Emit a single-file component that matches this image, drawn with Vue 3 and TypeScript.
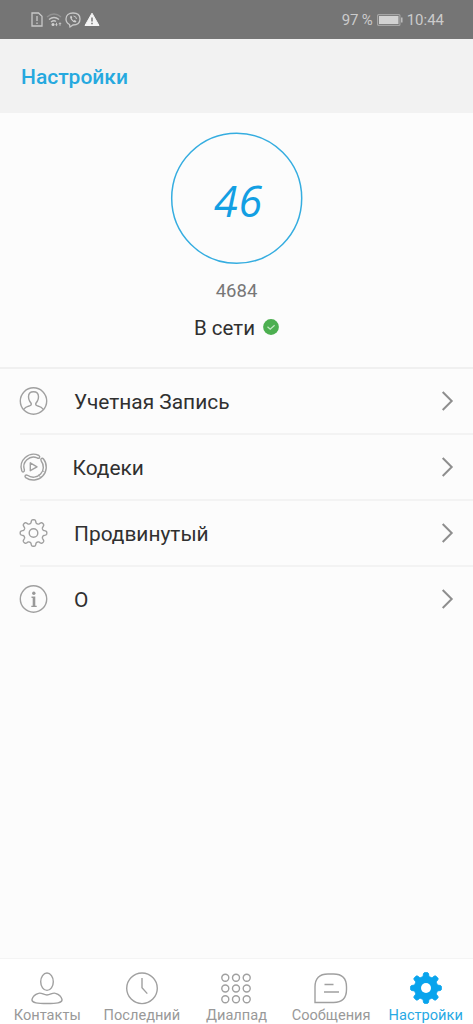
<script setup lang="ts">
interface Row { id: string; label: string }

const rows: Row[] = [
  { id: 'account', label: 'Учетная Запись' },
  { id: 'codecs', label: 'Кодеки' },
  { id: 'advanced', label: 'Продвинутый' },
  { id: 'about', label: 'О' },
]
const tabs: Row[] = [
  { id: 'contacts', label: 'Контакты' },
  { id: 'recent', label: 'Последний' },
  { id: 'dialpad', label: 'Диалпад' },
  { id: 'messages', label: 'Сообщения' },
  { id: 'settings', label: 'Настройки' },
]
const dots = [0, 1, 2, 3, 4, 5, 6, 7, 8].map((i) => ({ x: 6.3 + (i % 3) * 10.7, y: 6.8 + Math.floor(i / 3) * 10.7 }))

// Eight-toothed cog with softly rounded teeth; sharpness sets how square they are.
function cog(c: number, mid: number, depth: number, sharpness: number): string {
  const points: string[] = []
  for (let i = 0; i < 240; i++) {
    const a = (i * Math.PI) / 120
    const r = mid + (depth * Math.tanh(sharpness * Math.cos(8 * a))) / Math.tanh(sharpness)
    points.push(`${(c + r * Math.cos(a)).toFixed(2)} ${(c + r * Math.sin(a)).toFixed(2)}`)
  }
  return `M${points.join('L')}Z`
}
const outlineCog = cog(14, 11.6, 1.7, 1.8)
const solidCog = cog(17, 13.6, 1.9, 2.6)
</script>

<template>
  <div class="screen">
    <div class="status">
      <div class="status-icons">
        <svg width="12" height="15" viewBox="0 0 12 15"><path d="M1 1H7.5L11 4.200V14H1Z" class="sl" /><path d="M6 4V9M6 10.500V12" class="sl" /></svg>
        <svg width="16" height="15" viewBox="0 0 16 15"><path d="M1 5Q8-1 15 5" class="sl dim" /><path d="M3 7.500Q8 3.500 13 7.500M5 10Q8 7.700 10 9.500" class="sl" /><circle cx="7" cy="12.500" r="1.500" class="sf" /><path d="M10.500 10.800V13.700M9.300 12.500L10.500 13.700L11.700 12.500M14 13.700V10.800M12.800 12L14 10.800L15.200 12" class="sl thin" /></svg>
        <svg width="16" height="16" viewBox="0 0 16 16"><path d="M4.500 12.500Q1 10.800 1 7C1 3 4 1 8 1S15 3 15 7S12 13 8 13L5 15Z" class="sl" /><path d="M5.500 4Q4.500 5 6 7.500Q8 10.500 10.500 10.500L11.500 9.300L9.700 8L8.700 8.700Q7 7.500 6.700 6.200L7.300 5.500L6.300 3.800Z" class="sf" /><path d="M8.500 4Q11.300 4.200 11.500 7" class="sl thin" /></svg>
        <svg width="16" height="15" viewBox="0 0 16 15"><path d="M8 1.200L15 13.500H1Z" class="warn" /><path d="M8 5.500V9.500M8 10.800V12.300" class="bang" /></svg>
      </div>
      <div class="status-right">
        <span class="pct">97 %</span>
        <svg class="battery" width="26" height="12" viewBox="0 0 26 12"><rect x=".6" y=".6" width="22.300" height="10.800" rx="1" class="batt" /><rect x="2" y="2" width="19.500" height="8" class="level" /><path d="M24.800 3.500V8.500" class="sl" /></svg>
        <span class="time">10:44</span>
      </div>
    </div>

    <header class="header"><h1>Настройки</h1></header>

    <section class="profile">
      <div class="avatar">
        <svg width="132" height="132" viewBox="0 0 132 132"><circle cx="65.700" cy="66.300" r="65" /></svg>
        <span>46</span>
      </div>
      <div class="number">4684</div>
      <div class="presence">
        <span>В сети</span>
        <svg width="16" height="16" viewBox="0 0 16 16"><circle cx="8" cy="8" r="7.900" fill="#4caf50" /><path d="M4.500 7.700L7.200 10.200L11.600 6.300" fill="none" stroke="#c5e8c6" stroke-width="1.200" /></svg>
      </div>
    </section>

    <main class="list">
      <div v-for="row in rows" :key="row.id" class="row" :class="row.id">
        <svg class="row-icon" width="28" height="28" viewBox="0.5 0 28 28">
          <template v-if="row.id === 'account'">
            <circle cx="14" cy="14" r="13.200" />
            <path d="M4.200 22.500Q5.500 20.300 9 19.200Q12 18.400 11.800 16.800Q11.500 16 10.200 14.300Q9 12.200 9 9.700Q9 4.700 14 4.700T19 9.700Q19 12.200 17.800 14.300Q16.500 16 16.200 16.800Q16 18.400 19 19.200Q22.500 20.300 23.800 22.500" />
          </template>
          <template v-else-if="row.id === 'codecs'">
            <path d="M2.300 17.900A12.500 12.500 0 0 1 19.400 2.500Q20.800 3.400 19.900 4.900Q19 5.700 17.700 4.900A9.600 9.600 0 0 0 4.900 16.900Q5.100 18.500 4 18.900Q2.700 19.100 2.300 17.900Z" />
            <path d="M21.800 5.500Q23 4.800 24 6A13 13 0 0 1 6.200 24.600Q5 23.600 5.800 22.400Q6.800 21.600 8 22.300A10 10 0 0 0 21.700 8Q20.900 6.500 21.800 5.500Z" />
            <path d="M19.200 21.600L20.900 24.300M22.600 17.700L25.300 19" class="fine" />
            <path d="M10.800 9.800V17.700L17.500 13.800Z" />
          </template>
          <template v-else-if="row.id === 'advanced'">
            <path :d="outlineCog" /><circle cx="14" cy="14" r="4.300" />
          </template>
          <template v-else>
            <circle cx="14" cy="14" r="13.200" />
            <circle cx="14.300" cy="8.300" r="1.700" class="solid" />
            <path d="M12 11.600H15.800V20.700H17.200V22H11.800V20.700H13.200V12.900H12Z" class="solid" />
          </template>
        </svg>
        <span class="row-label">{{ row.label }}</span>
        <svg class="chevron" width="14" height="22" viewBox="0 0 14 22"><path d="M1.700 2L10.700 11L1.700 20" /></svg>
      </div>
    </main>

    <nav class="tabs">
      <div v-for="tab in tabs" :key="tab.id" class="tab" :class="[tab.id, { active: tab.id === 'settings' }]">
        <svg width="34" height="34" viewBox="0 0 34 34">
          <template v-if="tab.id === 'contacts'">
            <ellipse cx="17" cy="10.700" rx="6.300" ry="8.700" />
            <path d="M8.500 22.300C11.500 21.200 13.500 24 17 24S22.500 21.200 25.500 22.300Q31 24 32 28.500C32.500 32 26 32.500 17 32.500S1.500 32 2 28.500Q3 24 8.500 22.300Z" />
          </template>
          <template v-else-if="tab.id === 'recent'">
            <circle cx="17" cy="17.300" r="15.300" /><path d="M17 7.100V16.800L22.300 22.600" />
          </template>
          <template v-else-if="tab.id === 'dialpad'">
            <circle v-for="(dot, i) in dots" :key="i" :cx="dot.x" :cy="dot.y" r="3.500" />
          </template>
          <template v-else-if="tab.id === 'messages'">
            <path d="M1 31.500V16Q1 3 14 3H19.500Q32.500 3 32.500 16V18.500Q32.500 31.500 19.500 31.500Z" /><path d="M10.500 13.500H19.500M10 21H25" />
          </template>
          <template v-else>
            <path :d="solidCog" class="cog" /><circle cx="17" cy="17" r="5" class="hole" />
          </template>
        </svg>
        <span>{{ tab.label }}</span>
      </div>
    </nav>
  </div>
</template>

<style>
body { margin: 0; background: #fcfcfc; }
</style>

<style scoped>
.screen { width: 473px; height: 1024px; display: flex; flex-direction: column; overflow: hidden; background: #fcfcfc; font-family: Roboto, "Noto Sans", sans-serif; color: #303030; }
svg { display: block; flex: none; fill: none; overflow: visible; }
.status { height: 39px; box-sizing: border-box; background: #757575; display: flex; justify-content: space-between; align-items: center; padding: 0 29px 0 31px; color: #cbcbcb; font-size: 15px; line-height: 18px; }
.status-icons { display: flex; gap: 3px; align-items: center; }
.status-right { display: flex; align-items: center; padding-top: 1px; }
.pct { letter-spacing: -.2px; }
.battery { margin: 0 4px 0 4px; }
.sl { stroke: #c8c8c8; stroke-width: 1.3; }
.dim { stroke: #929292; }
.thin { stroke-width: 1; }
.sf, .level { fill: #d2d2d2; }
.batt { stroke: #a5a5a5; stroke-width: 1.2; }
.warn { fill: #f4f4f4; stroke: #f4f4f4; stroke-linejoin: round; }
.bang { stroke: #757575; stroke-width: 1.5; }
.header { height: 74px; box-sizing: border-box; padding: 25px 21px 0; background: #f2f2f2; }
h1 { margin: 0; font-size: 21px; font-weight: 500; line-height: 26px; color: #26a9df; }
.profile { height: 255px; box-sizing: border-box; padding-top: 19px; display: flex; flex-direction: column; align-items: center; }
.avatar { width: 132px; height: 132px; display: grid; place-items: center; color: #139fe3; font: italic 43px/60px "Open Sans", "Noto Sans", sans-serif; }
.avatar > * { grid-area: 1 / 1; }
.avatar svg { stroke: #35ade0; stroke-width: 1.5; }
.avatar span { padding: 6px 0 0 4px; letter-spacing: .8px; }
.number { margin-top: 15px; font-size: 18.5px; line-height: 24px; color: #777; }
.presence { margin-top: 11px; display: flex; align-items: center; gap: 8px; font-size: 20.5px; line-height: 28px; }
.presence svg { margin-top: -3px; }
.list { flex: 1; }
.row { position: relative; height: 66px; display: flex; align-items: center; padding: 0 18px 0 20px; }
.row::before { content: ""; position: absolute; left: 20px; right: 0; top: -1px; height: 2px; background: #f3f3f3; }
.row:first-child::before { left: 0; background: #f0f0f0; }
.row-icon { stroke: #a0a0a0; stroke-width: 1.4; stroke-linejoin: round; }
.row-icon .solid { fill: #999; stroke: none; }
.row-icon .fine { stroke-width: .8; }
.row-label { flex: 1; margin: 2px 0 0 26px; font-size: 20.9px; line-height: 28px; }
.codecs .row-label { margin-left: 24.5px; }
.chevron { stroke: #8e8e8e; stroke-width: 2; }
.tabs { height: 66px; box-sizing: border-box; border-top: 1px solid #f4f4f4; background: #fff; display: grid; grid-template-columns: repeat(5, 1fr); color: #999; }
.tab { display: flex; flex-direction: column; align-items: center; padding-top: 12px; font-size: 14.6px; line-height: 18px; white-space: nowrap; }
.tab svg { stroke: #a0a0a0; stroke-width: 1.4; }
.tab span { margin-top: 1px; }
.active { color: #28a9e4; }
.active .cog { fill: #08a4ed; stroke: #08a4ed; stroke-width: 1; }
.active .hole { fill: #fff; stroke: none; }
</style>
